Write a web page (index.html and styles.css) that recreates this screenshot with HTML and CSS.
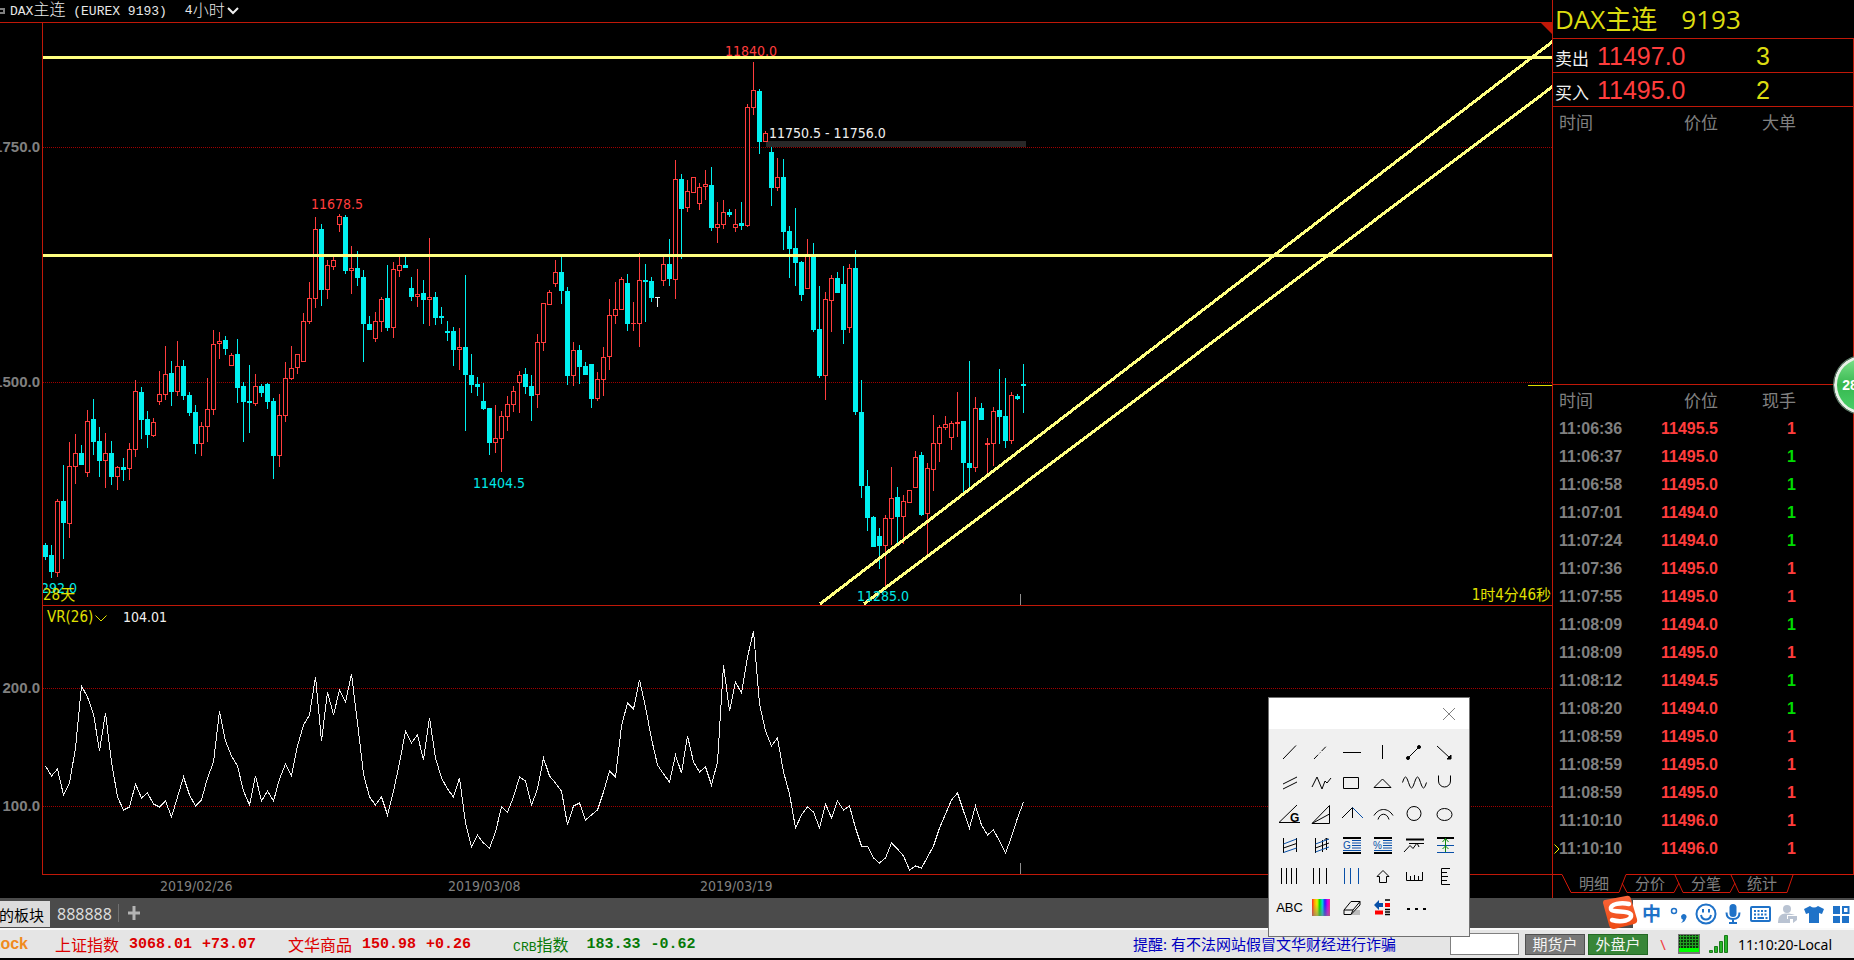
FILE: index.html
```html
<!DOCTYPE html>
<html lang="zh-CN">
<head>
<meta charset="utf-8">
<title>DAX主连 (EUREX 9193)</title>
<link rel="stylesheet" href="styles.css">
</head>
<body>
<div class="app">
  <main class="main">
    <section class="chart">
      <header class="chart-title">
        <span class="window-mark"></span>
        <h1 class="symbol"><span class="mono">DAX</span>主连<span class="mono"> (EUREX 9193)</span></h1>
        <button class="period" type="button"><span class="mono">4</span>小时<svg class="chevron" viewBox="0 0 12 8"><path d="M1 1L6 6L11 1"/></svg></button>
      </header>

      <svg class="pane pane-price" role="img" aria-label="K线图">
        <defs><clipPath id="plot"><rect x="43" y="0" width="4000" height="583"/></clipPath></defs>
        <g transform="translate(0 -23)">
          <line class="grid" x1="43" x2="100%" y1="147.5" y2="147.5"/>
          <line class="grid" x1="43" x2="100%" y1="382.5" y2="382.5"/>
          <rect class="gap-zone" x="766" y="141" width="260" height="6"/>
          <g id="candles" shape-rendering="crispEdges"></g>
          <text class="label up" x="311" y="209">11678.5</text>
          <text class="label up" x="725" y="56">11840.0</text>
          <text class="label down" x="473" y="488">11404.5</text>
          <text class="label plain" x="769" y="138">11750.5 - 11756.0</text>
          <g clip-path="url(#plot)" transform="translate(0 23)">
            <text class="label down end" x="77" y="570">11292.0</text>
          </g>
          <text class="label note" x="43" y="600">28天</text>
          <g class="trend">
            <line x1="42" x2="100%" y1="57.5" y2="57.5"/>
            <line x1="42" x2="100%" y1="255.5" y2="255.5"/>
            <path d="M820 604L1552 42L2552 -726M864 604L1552 87L2552 -664"/>
          </g>
          <text class="label down" x="857" y="601">11285.0</text>
          <path class="cursor-tick" d="M1020.5 594V605"/>
          <line class="frame" x1="42.5" x2="42.5" y1="23" y2="606"/>
          <line class="frame" x1="42" x2="100%" y1="605.5" y2="605.5"/>
          <text class="axis" x="40" y="152">11750.0</text>
          <text class="axis" x="40" y="387">11500.0</text>
        </g>
        <svg x="100%" y="0" overflow="visible">
          <path class="corner" d="M-11 0H0V11z"/>
          <path class="last-mark" d="M-24 362.5H0"/>
          <text class="label note end" x="-1" y="577">1时4分46秒</text>
        </svg>
      </svg>

      <svg class="pane pane-vr" role="img" aria-label="VR(26) 指标">
        <g transform="translate(0 -606)">
          <line class="grid" x1="43" x2="100%" y1="688.5" y2="688.5"/>
          <line class="grid" x1="43" x2="100%" y1="806.5" y2="806.5"/>
          <polyline id="vr" class="vr-line"/>
          <text class="label note" x="47" y="622">VR(26)</text>
          <path class="note-chevron" d="M95.5 615.5L101 621L106.5 615.5"/>
          <text class="label plain" x="123" y="622">104.01</text>
          <path class="cursor-tick" d="M1020.5 863V874"/>
          <line class="frame" x1="42.5" x2="42.5" y1="606" y2="875"/>
          <line class="frame" x1="42" x2="100%" y1="874.5" y2="874.5"/>
          <text class="axis" x="40" y="693">200.0</text>
          <text class="axis" x="40" y="811">100.0</text>
        </g>
      </svg>

      <footer class="dates"><time>2019/02/26</time><time>2019/03/08</time><time>2019/03/19</time></footer>
    </section>

    <aside class="quote">
      <h2 class="quote-title"><span>DAX主连</span><span>9193</span></h2>
      <div class="book">
        <div class="book-row"><span class="side">卖出</span><span class="price">11497.0</span><span class="lots">3</span></div>
        <div class="book-row"><span class="side">买入</span><span class="price">11495.0</span><span class="lots">2</span></div>
        <table class="ticks large-orders"><thead><tr><th>时间</th><th>价位</th><th>大单</th></tr></thead></table>
        <div class="trades">
          <table class="ticks">
            <thead><tr><th>时间</th><th>价位</th><th>现手</th></tr></thead>
            <tbody>
              <tr><td>11:06:36</td><td>11495.5</td><td class="buy">1</td></tr>
              <tr><td>11:06:37</td><td>11495.0</td><td class="sell">1</td></tr>
              <tr><td>11:06:58</td><td>11495.0</td><td class="sell">1</td></tr>
              <tr><td>11:07:01</td><td>11494.0</td><td class="sell">1</td></tr>
              <tr><td>11:07:24</td><td>11494.0</td><td class="sell">1</td></tr>
              <tr><td>11:07:36</td><td>11495.0</td><td class="buy">1</td></tr>
              <tr><td>11:07:55</td><td>11495.0</td><td class="buy">1</td></tr>
              <tr><td>11:08:09</td><td>11494.0</td><td class="sell">1</td></tr>
              <tr><td>11:08:09</td><td>11495.0</td><td class="buy">1</td></tr>
              <tr><td>11:08:12</td><td>11494.5</td><td class="sell">1</td></tr>
              <tr><td>11:08:20</td><td>11494.0</td><td class="sell">1</td></tr>
              <tr><td>11:08:59</td><td>11495.0</td><td class="buy">1</td></tr>
              <tr><td>11:08:59</td><td>11495.0</td><td class="buy">1</td></tr>
              <tr><td>11:08:59</td><td>11495.0</td><td class="buy">1</td></tr>
              <tr><td>11:10:10</td><td>11496.0</td><td class="buy">1</td></tr>
              <tr class="latest"><td><svg class="pointer" viewBox="0 0 6 10"><path d="M.5 .5L5 5L.5 9.5"/></svg>11:10:10</td><td>11496.0</td><td class="buy">1</td></tr>
            </tbody>
          </table>
        </div>
      </div>
      <nav class="quote-tabs">
        <svg class="tab-lines"><path d="M-1 .5H9L18 18.5H66L73 .5H4000"/><path d="M69 9L74 18.5H121L126 9M122 1L130 18.5H177L182 9M178 1L186 18.5H234L240 1"/></svg>
        <button type="button">明细</button><button type="button">分价</button><button type="button">分笔</button><button type="button">统计</button>
      </nav>
    </aside>
  </main>

  <nav class="boards">
    <button class="board current" type="button">我的板块</button>
    <button class="board" type="button">888888</button>
    <button class="add" type="button" aria-label="添加板块"><svg viewBox="0 0 12 14"><path d="M6 0V14M0 7H12"/></svg></button>
    <div class="ime">
      <svg class="ime-logo" viewBox="0 0 36 36"><defs><linearGradient id="sg" x1="0" y1="0" x2="0" y2="1"><stop offset="0" stop-color="#f9653a"/><stop offset="1" stop-color="#ee4a12"/></linearGradient></defs><path fill="url(#sg)" d="M3 5Q1 5 1 8L7 30Q8 34 12 34L32 29Q36 28 35 24L29 4Q28 0 24 1z"/><path fill="none" stroke="#fff" stroke-width="4.500" stroke-linecap="round" d="M27 9C19 7 8 9 9 14C10 18 28 15 29 20C30 25 20 28 10 25"/></svg>
      <div class="ime-bar">
        <button type="button" class="ime-zh">中</button>
        <button type="button" aria-label="标点"><svg viewBox="0 0 24 24"><circle cx="7" cy="9" r="2.500" fill="none" stroke="#1f72c8" stroke-width="1.500"/><path fill="#1f72c8" d="M14 14.500a2.800 2.800 0 1 1 5 2Q18 20 14 21Q16 19 16 17.500Q14 17 14 14.500z"/></svg></button>
        <button type="button" aria-label="表情"><svg viewBox="0 0 24 24" fill="none" stroke="#1f72c8" stroke-width="2"><circle cx="12" cy="12" r="9.500"/><path d="M7 13Q8 17.500 12 17.500T17 13M9 7V10.500M15 7V10.500"/></svg></button>
        <button type="button" aria-label="语音"><svg viewBox="0 0 24 24"><rect x="8.500" y="2" width="7" height="13" rx="3.500" fill="#1f72c8"/><path fill="none" stroke="#1f72c8" stroke-width="2" d="M5.500 10.500Q5.500 17 12 17T18.500 10.500M12 17V21M8 21H16"/></svg></button>
        <button type="button" aria-label="键盘"><svg viewBox="0 0 24 24" fill="none" stroke="#1f72c8"><rect x="3" y="5" width="19" height="14" rx="1" stroke-width="2"/><path stroke-width="2" stroke-dasharray="2 1.500" d="M6 9H20M6 12.500H20"/><path stroke-width="2" d="M6 16H8M9.500 16H16M17.500 16H19.500"/></svg></button>
        <button type="button" aria-label="账户"><svg viewBox="0 0 24 24" fill="#b9c3d2"><circle cx="12" cy="7" r="4"/><path d="M3 20Q3 12 10 11.500H14Q18 12 20 13H12V17H15V21H3z"/><path d="M13 14H22V18L18 21V17H13z"/></svg></button>
        <button type="button" aria-label="皮肤"><svg viewBox="0 0 24 24" fill="#1f72c8"><path d="M8 4Q12 7 16 4L22 7L20 12L17 11V21H7V11L4 12L2 7z"/></svg></button>
        <button type="button" aria-label="工具箱"><svg viewBox="0 0 24 24"><path fill="#1f72c8" d="M4 4H11V12H4zM4 14H11V21H4zM13 14H20V21H13z"/><rect x="14" y="5" width="5.500" height="6" fill="none" stroke="#1f72c8" stroke-width="2"/></svg></button>
      </div>
    </div>
  </nav>

  <footer class="status">
    <span class="brand">Stock</span>
    <div class="indices">
      <span class="index rise"><span>上证指数</span><b>3068.01</b><b>+73.07</b></span>
      <span class="index rise"><span>文华商品</span><b>150.98</b><b>+0.26</b></span>
      <span class="index fall"><span><span class="mono">CRB</span>指数</span><b>183.33</b><b>-0.62</b></span>
    </div>
    <a class="notice" href="#">提醒: 有不法网站假冒文华财经进行诈骗</a>
    <input class="search" type="text" aria-label="代码">
    <button class="account" type="button">期货户</button>
    <button class="account live" type="button">外盘户</button>
    <span class="slash">\</span>
    <svg class="meter" viewBox="0 0 22 20"><defs><pattern id="dots" width="3" height="3" patternUnits="userSpaceOnUse"><rect width="3" height="3" fill="#22a022"/><path fill="#0c350c" d="M0 0H2V2H0z"/></pattern></defs><path fill="#777" d="M0 0H22V20H0z"/><rect x="1" y="1" width="20" height="13" fill="url(#dots)"/><rect x="1" y="14" width="20" height="4" fill="#0f0"/></svg>
    <svg class="signal" viewBox="0 0 22 18"><path fill="#28b428" stroke="#1a7a1a" d="M1.500 15.500h3v2h-3zM6.500 11.500h3v6h-3zM11.500 6.500h3v11h-3zM16.500 .5h3v17h-3z"/></svg>
    <time class="clock">11:10:20-Local</time>
  </footer>

  <button class="ball" type="button">28</button>

  <div class="palette" role="dialog" aria-label="画线工具">
    <div class="palette-head"><button type="button" class="close" aria-label="关闭"><svg viewBox="0 0 12 12"><path d="M0 0L12 12M12 0L0 12"/></svg></button></div>
    <div class="tools">
      <button type="button" aria-label="线段"><svg viewBox="0 0 31 31"><path d="M9 22L22 8.500"/></svg></button>
      <button type="button" aria-label="虚线"><svg viewBox="0 0 31 31"><path stroke-dasharray="6 2 1 2" d="M9 22L22 8.500"/></svg></button>
      <button type="button" aria-label="水平线"><svg viewBox="0 0 31 31"><path d="M7 15.500H25"/></svg></button>
      <button type="button" aria-label="垂直线"><svg viewBox="0 0 31 31"><path d="M15.500 8V22"/></svg></button>
      <button type="button" aria-label="双端线"><svg viewBox="0 0 31 31"><path d="M9 22L22 9"/><circle class="solid" cx="10" cy="21" r="1.500"/><circle class="solid" cx="21" cy="10" r="1.500"/></svg></button>
      <button type="button" aria-label="箭头"><svg viewBox="0 0 31 31"><path d="M8 9L21 21"/><path class="solid" d="M22 18V22H18z"/></svg></button>

      <button type="button" aria-label="平行线"><svg viewBox="0 0 31 31"><path d="M9 16L23 9M9 21L23 14"/></svg></button>
      <button type="button" aria-label="折线"><svg viewBox="0 0 31 31"><path d="M7 19L12 9L17 21L20 13L22 15L26 10"/></svg></button>
      <button type="button" aria-label="矩形"><svg viewBox="0 0 31 31"><path d="M7.500 9.500H22.500V20.500H7.500z"/></svg></button>
      <button type="button" aria-label="三角形"><svg viewBox="0 0 31 31"><path d="M7 19.500L15.500 11L24 19.500z"/></svg></button>
      <button type="button" aria-label="波浪"><svg viewBox="0 0 31 31"><path d="M4.500 14.500q3 -11 6 0t6 0t6 0t6 0"/></svg></button>
      <button type="button" aria-label="U形"><svg viewBox="0 0 31 31"><path d="M9.500 7.500V13a6 6 0 0 0 12 0V7.500"/></svg></button>

      <button type="button" aria-label="江恩角度"><svg viewBox="0 0 31 31"><path d="M23 6L5 23.500H26"/><text class="glyph" x="16" y="23">G</text></svg></button>
      <button type="button" aria-label="速阻线"><svg viewBox="0 0 31 31"><path d="M7 24.500H24.500V6.500zM7 24.500L24.500 15"/></svg></button>
      <button type="button" aria-label="对称角"><svg viewBox="0 0 31 31"><path d="M6 19L16.500 8.500V19"/><path class="blue" d="M16.500 8.500L27 19"/></svg></button>
      <button type="button" aria-label="圆弧"><svg viewBox="0 0 31 31"><path d="M7 16.500C12 8.500 21 8.500 26 16.500M11 20.500C13 13.500 20 13.500 22 20.500"/></svg></button>
      <button type="button" aria-label="圆"><svg viewBox="0 0 31 31"><circle cx="16" cy="14.500" r="7"/></svg></button>
      <button type="button" aria-label="椭圆"><svg viewBox="0 0 31 31"><ellipse cx="15.500" cy="15.500" rx="7.500" ry="6"/></svg></button>

      <button type="button" aria-label="通道"><svg viewBox="0 0 31 31"><path d="M9.500 8V23M22.500 8V22M9.500 18L22.500 13.500"/><path class="blue" d="M9.500 14L22.500 9M9.500 22.500L22.500 18"/></svg></button>
      <button type="button" aria-label="回归通道"><svg viewBox="0 0 31 31"><path d="M10.500 8V23M17.500 10V22M21.500 8V20M10.500 18L24 13M19.500 10L21.500 8L23.500 10"/><path class="blue" d="M10.500 14L24 9M10.500 22L24 17"/></svg></button>
      <button type="button" aria-label="黄金分割"><svg viewBox="0 0 31 31"><path stroke-width="2" d="M7 8H25M7 23H25"/><path class="blue" d="M16 10.500H25M16 13H25M16 15.500H25M16 18H25M7 20.500H25"/><text class="glyph small" x="7" y="18.500">G</text></svg></button>
      <button type="button" aria-label="百分比线"><svg viewBox="0 0 31 31"><path stroke-width="2" d="M7 8H25M7 23H25"/><path class="blue" d="M16 10.500H25M16 13H25M16 15.500H25M16 18H25M7 20.500H25"/><text class="glyph small" x="6" y="18.500">%</text></svg></button>
      <button type="button" aria-label="波浪尺"><svg viewBox="0 0 31 31"><path stroke-width="2" d="M8 9.500H26"/><path d="M11 13.500H26M6 22L12 15.500L15 18.500L19 13L21 17"/></svg></button>
      <button type="button" aria-label="测量"><svg viewBox="0 0 31 31"><path stroke-width="2" d="M8 8H25"/><path class="blue" d="M8 15.500H25M8 22.500H25"/><path class="green" d="M16.500 8V22M13.500 12L16.500 8.500L19.500 12M13.500 19L16.500 16L19.500 19"/></svg></button>

      <button type="button" aria-label="等周期线"><svg viewBox="0 0 31 31"><path d="M7.500 7V23M12.500 7V23M17.500 7V23M22.500 7V23"/></svg></button>
      <button type="button" aria-label="周期线"><svg viewBox="0 0 31 31"><path d="M8.500 7V23M14.500 7V23M21.500 7V23"/></svg></button>
      <button type="button" aria-label="斐波那契周期"><svg viewBox="0 0 31 31"><path class="blue" d="M8.500 7V23M14.500 7V23M22.500 7V23"/></svg></button>
      <button type="button" aria-label="上箭头"><svg viewBox="0 0 31 31"><path d="M10 15.500L16 9.500L22 15.500H19.500V21.500H12.500V15.500z"/></svg></button>
      <button type="button" aria-label="水平尺"><svg viewBox="0 0 31 31"><path d="M8.500 11V19.500H24.500V11M12.500 15V19M16.500 14V19M20.500 15V19"/></svg></button>
      <button type="button" aria-label="垂直尺"><svg viewBox="0 0 31 31"><path d="M21 7.500H12.500V23.500H21M12.500 11.500H18M12.500 15.500H19M12.500 19.500H18"/></svg></button>

      <button type="button" class="abc">ABC</button>
      <button type="button" class="swatch" aria-label="颜色"><span></span></button>
      <button type="button" aria-label="橡皮"><svg viewBox="0 0 31 31"><path fill="#bbb" stroke="none" d="M14 18H24V23H10z"/><path fill="#f0f0f0" d="M8 18L15 9.500H24L17 18zM8 18V22.500H15L24 13V9.500M17 18L15 22.500"/></svg></button>
      <button type="button" aria-label="管理"><svg viewBox="0 0 31 31"><path class="fill-blue" d="M7 13L12 8V11H16V15H12V18z"/><path class="fill-red" d="M8 18.500H16V22.500H8zM18 11H23V15H18z"/><path stroke-width="1.500" d="M18 8H23M18 17.500H23M18 20H23M18 22.500H23"/></svg></button>
      <button type="button" aria-label="更多"><svg viewBox="0 0 31 31"><path stroke-width="2" d="M9 17H12M17 17H20M25 17H28"/></svg></button>
    </div>
  </div>
</div>
<script src="chart.js"></script>
</body>
</html>
```

FILE: chart.js
```js
// Each candle: colour code, high, body top, body bottom, low (pixels down the pane stack).
const STEP = 6;
const LEFT = 43;
const COLORS = { r: '#ff3d3d', c: '#00f0f0', w: '#f0f0f0' };

const candles = `c543,545,557,560 c545,555,572,578 r499,501,573,577 c465,501,523,559 r442,466,524,538 r434,453,467,484
c445,453,465,465 r410,421,473,477 c399,419,442,455 c427,441,461,477 r433,453,461,488 c441,453,477,485 r466,467,477,490
c458,467,470,481 r443,449,469,480 r380,391,450,457 c387,392,420,439 c411,419,435,448 r418,422,436,437 r371,394,402,405
r346,374,395,400 c361,373,392,406 r341,366,392,396 c360,366,396,400 c392,395,413,416 c405,412,444,454 r422,426,444,456
r378,409,427,442 r330,344,410,415 r332,341,344,359 c336,340,349,355 r353,355,366,366 c339,354,388,403 c382,386,402,442
c365,401,403,433 r374,386,404,406 c384,386,393,397 c383,384,402,409 c398,401,456,479 r394,415,456,467 r362,378,416,422
r346,368,379,380 r354,354,368,374 r313,321,362,362 r282,298,322,324 r217,229,299,308 c224,229,290,306 r260,265,290,299
r256,260,267,270 r214,216,225,232 c215,217,271,274 r246,268,271,294 c251,268,278,286 c270,277,324,362 c316,324,330,330
r312,321,339,342 r297,299,322,332 c265,298,328,331 r262,269,328,338 r256,265,271,277 c256,265,268,268 c277,288,297,301
r269,294,297,307 c280,293,300,324 r238,297,300,326 c292,297,318,325 c307,316,318,324 c321,331,333,341 c327,331,350,366
r328,347,350,370 c275,347,375,431 c354,375,385,393 c377,384,387,396 c383,401,409,410 c408,408,443,455 r405,438,443,453
r411,416,439,472 r396,404,417,431 r386,391,405,412 r371,375,383,413 c368,374,387,394 c375,386,396,421 r334,342,395,408
r303,303,343,351 r290,292,305,305 r260,272,284,287 c256,272,291,304 c287,291,376,385 r342,350,376,386 c345,350,367,384
c362,366,375,375 c364,364,399,408 r372,379,399,401 r347,357,380,396 r299,315,357,370 r282,309,316,324 r277,279,310,310
c274,283,324,331 r302,323,324,331 r253,280,324,347 c264,280,282,322 c277,281,298,302 w297,297,298,307 r256,264,281,286
c239,264,279,286 r160,179,280,299 c174,179,209,259 r180,191,208,212 r177,177,193,193 r183,187,204,210 r170,184,187,200
c167,185,228,231 r202,224,228,243 r200,212,225,229 c209,212,215,217 r209,224,228,232 c202,223,226,230 r104,107,226,227
r62,90,108,115 c89,91,142,154 r131,133,142,142 c147,152,188,206 r158,177,188,191 c159,177,232,250 c226,231,249,278
c208,248,263,286 c261,262,295,301 r239,256,289,289 c243,256,330,332 c286,329,376,378 r292,299,376,400 r275,278,301,332
c272,278,293,293 c266,284,330,344 r264,268,328,333 c250,268,412,415 c380,412,486,498 c470,486,518,531 c516,517,547,547
c528,536,546,569 r515,518,546,586 r467,498,519,545 c487,497,517,545 r495,501,517,544 r490,490,503,503 r451,457,488,488
c452,455,515,516 r463,468,514,555 r415,443,470,491 r425,427,444,462 r416,424,428,430 r421,423,438,450 r392,422,424,437
c421,421,463,492 c361,463,468,490 r397,408,468,472 c403,408,420,420 r438,443,445,474 r407,411,444,466 c369,410,417,444
c378,416,441,448 r392,395,441,444 c394,396,399,400 c364,384,386,413`.split(/\s+/);

const vr = [766,776,769,795,783,748,686,697,714,751,713,762,797,810,807,784,798,793,804,807,801,817,797,777,795,806,800,
778,762,711,741,756,766,791,805,776,801,791,801,779,764,776,746,725,715,677,741,692,715,690,702,674,723,774,797,805,797,
815,791,763,731,743,735,760,718,758,778,789,797,778,823,847,835,843,848,832,807,812,797,777,781,805,789,758,776,783,791,
825,806,803,820,815,810,792,771,777,726,703,709,680,707,739,765,774,782,755,773,736,762,772,767,785,762,665,711,682,693,
657,631,704,731,746,738,772,794,828,815,807,812,828,804,818,801,810,806,828,846,846,858,863,858,843,849,856,870,866,868,
857,846,828,814,800,793,811,828,806,825,835,830,841,853,837,818,802];

const layer = document.getElementById('candles');
const NS = 'http://www.w3.org/2000/svg';

function rect(x, y, w, h, fill) {
  const el = document.createElementNS(NS, 'rect');
  el.setAttribute('x', x);
  el.setAttribute('y', y);
  el.setAttribute('width', w);
  el.setAttribute('height', h);
  el.setAttribute('fill', fill);
  layer.append(el);
}

candles.forEach((entry, i) => {
  const kind = entry[0];
  const [high, top, bottom, low] = entry.slice(1).split(',').map(Number);
  const x = LEFT + STEP * i;
  const color = COLORS[kind];
  rect(x + 2, high, 1, low - high, color);
  rect(x, top, 5, bottom - top, color);
  if (kind === 'r' && bottom - top > 2) {
    rect(x + 1, top + 1, 3, bottom - top - 2, '#000');
  }
});

document.getElementById('vr').setAttribute('points',
  vr.map((y, i) => `${LEFT + 2.5 + STEP * i},${y}`).join(' '));
```

FILE: styles.css
```css
* { box-sizing: border-box; }

body {
  margin: 0;
  background: #000;
  color: #808080;
  font-family: "Noto Sans", "Noto Sans CJK SC", sans-serif;
  font-size: 15px;
}

button {
  padding: 0;
  border: 0;
  background: none;
  color: inherit;
  font: inherit;
}

svg { display: block; }

.app {
  position: relative;
  display: flex;
  flex-direction: column;
  min-height: 100vh;
  overflow: hidden;
}

.main { display: flex; }

/* chart */
.chart {
  flex: 1;
  min-width: 0;
}

.chart-title {
  display: flex;
  align-items: center;
  height: 23px;
  border-bottom: 1px solid #c01808;
  color: #e8e8e8;
  font-family: "Liberation Serif", "Noto Sans CJK SC", sans-serif;
  font-size: 16px;
  line-height: 22px;
}

.window-mark {
  width: 5px;
  height: 6px;
  margin-right: 5px;
  border: 2px solid #808080;
  border-left: 0;
}

.symbol {
  margin: 0 18px 0 0;
  font-size: 16px;
  font-weight: 300;
  white-space: pre;
}

.mono {
  font-family: "Liberation Mono", monospace;
  font-size: 13px;
}

.period {
  display: flex;
  align-items: center;
  font-weight: 300;
}

.chevron {
  width: 12px;
  height: 8px;
  margin-left: 2px;
  fill: none;
  stroke: #f0f0f0;
  stroke-width: 2;
}

.pane { width: 100%; }
.pane-price { height: 583px; }
.pane-vr { height: 269px; }

.grid {
  stroke: #a00000;
  stroke-dasharray: 1 1;
  shape-rendering: crispEdges;
}

.frame { stroke: #c01808; }
.gap-zone { fill: #282828; }
.corner { fill: #c01808; }
.last-mark { stroke: #dcdc00; }
.cursor-tick { stroke: #909090; }

.trend {
  fill: none;
  stroke: #ffff80;
  stroke-width: 3;
  shape-rendering: crispEdges;
}

.vr-line {
  fill: none;
  stroke: #f0f0f0;
  shape-rendering: crispEdges;
}

.label {
  font-family: "DejaVu Sans Condensed", "Noto Sans", "Noto Sans CJK SC", sans-serif;
  font-size: 14px;
}

.label.up { fill: #ff3d3d; }
.label.down { fill: #00e8e8; }
.label.plain { fill: #f0f0f0; }
.label.note { fill: #e0e000; font-size: 15px; }
.label.end { text-anchor: end; }

.note-chevron {
  fill: none;
  stroke: #e0e000;
}

.axis {
  fill: #808080;
  font: bold 15px "Liberation Sans", sans-serif;
  text-anchor: end;
}

.dates {
  display: grid;
  grid-template-columns: 288px 252px auto;
  height: 23px;
  padding-left: 160px;
  font-family: "DejaVu Sans Condensed", "Noto Sans", sans-serif;
  font-size: 14px;
  line-height: 23px;
}

/* quote panel */
.quote {
  display: flex;
  flex-direction: column;
  width: 302px;
  border-left: 1px solid #c01808;
}

.quote-title {
  display: flex;
  gap: 24px;
  height: 38px;
  margin: 0;
  padding-left: 2px;
  color: #dcdc10;
  font-family: "Open Sans", "Noto Sans CJK SC", sans-serif;
  font-size: 26px;
  font-weight: 400;
  line-height: 38px;
}

.book {
  display: flex;
  flex: 1;
  flex-direction: column;
  border-top: 1px solid #c01808;
  border-right: 1px solid #c01808;
}

.book-row {
  display: grid;
  grid-template-columns: 42px 120px 53px;
  align-items: baseline;
  height: 34px;
  padding-left: 2px;
  border-bottom: 1px solid #c01808;
  line-height: 34px;
}

.side {
  color: #f0f0f0;
  font-size: 17px;
}

.price {
  color: #ff3d3d;
  font-family: "Liberation Sans", sans-serif;
  font-size: 25px;
}

.lots {
  color: #dcdc10;
  font-family: "Liberation Sans", sans-serif;
  font-size: 25px;
  text-align: right;
}

.ticks {
  width: 243px;
  border-collapse: collapse;
  table-layout: fixed;
  font: bold 16px "Liberation Sans", sans-serif;
}

.ticks th {
  height: 30px;
  padding: 0;
  font-family: "Noto Sans CJK SC", sans-serif;
  font-size: 17px;
  font-weight: 400;
  line-height: 30px;
  text-align: right;
}

.ticks td {
  height: 28px;
  padding: 0;
  color: #ff3d3d;
  line-height: 28px;
  text-align: right;
}

.ticks th:first-child,
.ticks td:first-child {
  position: relative;
  width: 80px;
  padding-left: 6px;
  text-align: left;
}

.ticks td:first-child { color: #808080; }
.ticks th:nth-child(2) { width: 85px; }
.ticks td.buy { color: #ff3d3d; }
.ticks td.sell { color: #00dc00; }

.large-orders { margin-bottom: auto; }

.trades {
  padding-bottom: 11px;
  border-top: 1px solid #c01808;
}

.pointer {
  position: absolute;
  top: 9px;
  left: 1px;
  width: 6px;
  height: 10px;
  fill: none;
  stroke: #f0f000;
}

.quote-tabs {
  position: relative;
  display: grid;
  grid-template-columns: repeat(4, 56px);
  height: 24px;
  padding: 0 0 5px 13px;
}

.quote-tabs button {
  position: relative;
  font-size: 15px;
  line-height: 19px;
}

.tab-lines {
  position: absolute;
  top: 0;
  left: 0;
  width: 100%;
  height: 24px;
  fill: none;
  stroke: #d01808;
}

/* board tabs */
.boards {
  display: flex;
  align-items: stretch;
  height: 32px;
  border-bottom: 2px solid #fafafa;
  background: #4b4b4b;
}

.board {
  margin: 3px 0 1px;
  padding: 0 6px 0 7px;
  color: #dcdcdc;
  font-size: 16px;
}

.board.current {
  display: flex;
  align-items: center;
  justify-content: flex-end;
  width: 50px;
  overflow: hidden;
  background: #dcdcdc;
  color: #000;
  font-size: 15px;
  white-space: nowrap;
}

.add {
  align-self: center;
  padding: 2px 9px;
  border-left: 1px solid #707070;
}

.add svg {
  width: 12px;
  height: 14px;
  stroke: #b4b4b4;
  stroke-width: 3;
}

.ime {
  display: flex;
  margin: 2px 0 0 auto;
}

.ime-logo {
  z-index: 1;
  width: 36px;
  height: 36px;
  margin: -5px -5px 0 0;
}

.ime-bar {
  display: grid;
  grid-template-columns: repeat(8, 27px);
  align-items: center;
  justify-content: end;
  width: 221px;
  background: #fff;
}

.ime-bar button {
  display: flex;
  justify-content: center;
}

.ime-bar svg {
  width: 24px;
  height: 24px;
}

.ime-bar .ime-zh {
  color: #1f72c8;
  font-size: 19px;
  font-weight: 700;
  line-height: 24px;
}

/* status bar */
.status {
  display: flex;
  align-items: center;
  height: 28px;
  overflow: hidden;
  background: #e5e5e5;
  color: #000;
}

.brand {
  display: flex;
  justify-content: flex-end;
  width: 28px;
  margin-right: 27px;
  color: #f08a20;
  font: bold 16px "Liberation Sans", sans-serif;
}

.indices {
  display: flex;
  flex: 1;
  gap: 32px;
}

.index {
  display: flex;
  align-items: center;
  gap: 10px;
  font-size: 16px;
}

.index b { font: bold 15px "Liberation Mono", monospace; }
.rise { color: #dc0000; }
.fall { color: #087a08; margin-left: 10px; }
.fall > span { margin-right: 8px; }

.notice {
  width: 317px;
  color: #0000c0;
  font-size: 15px;
  line-height: 22px;
  text-decoration: none;
  white-space: nowrap;
}

.search {
  width: 69px;
  height: 22px;
  border: 1px solid #808080;
  background: #fff;
}

.account {
  width: 60px;
  height: 21px;
  margin-left: 6px;
  border: 1px solid #505050;
  background: #787878;
  color: #f4f4f4;
  font-size: 15px;
  line-height: 18px;
}

.account.live {
  margin-left: 3px;
  border-color: #246824;
  background: #388638;
}

.slash {
  width: 30px;
  color: #f04040;
  text-align: center;
}

.meter {
  width: 22px;
  height: 20px;
}

.signal {
  width: 22px;
  height: 18px;
  margin: 0 8px;
}

.clock {
  width: 116px;
  font-family: "Noto Sans", sans-serif;
  font-size: 14px;
}

/* floating ball */
.ball {
  position: absolute;
  top: 356px;
  right: -36px;
  width: 56px;
  height: 58px;
  padding-right: 24px;
  border: 3px solid #e8f0e8;
  border-radius: 50%;
  outline: 1px solid #60806c;
  background: linear-gradient(#7ae088, #38b850 50%, #48d068);
  color: #fff;
  font: bold 14px "Liberation Sans", sans-serif;
}

/* drawing tools */
.palette {
  position: absolute;
  right: 384px;
  bottom: 23px;
  width: 202px;
  border: 1px solid #707070;
  background: #f0f0f0;
}

.palette-head {
  display: flex;
  align-items: center;
  justify-content: flex-end;
  height: 31px;
  padding-right: 14px;
  background: #fff;
}

.close svg {
  width: 12px;
  height: 12px;
  stroke: #808080;
}

.tools {
  display: grid;
  grid-template-columns: repeat(6, 31px);
  grid-auto-rows: 31px;
  padding: 8px 5px 13px;
}

.tools button { color: #000; }

.tools svg {
  width: 31px;
  height: 31px;
  fill: none;
  stroke: #000;
}

.tools .solid { fill: #000; }
.tools .blue { stroke: #0850a8; }
.tools .green { stroke: #108a10; }
.tools .fill-blue { fill: #0850a8; stroke: none; }
.tools .fill-red { fill: #f00; stroke: none; }

.glyph {
  fill: #000;
  stroke: none;
  font: bold 12px "Liberation Sans", sans-serif;
}

.glyph.small {
  fill: #0850a8;
  font: 10px "Liberation Sans", sans-serif;
}

.tools .abc { font: 13px "Liberation Sans", sans-serif; }

.swatch {
  display: flex;
  align-items: center;
  justify-content: center;
}

.swatch span {
  width: 18px;
  height: 17px;
  background:
    linear-gradient(transparent 30%, rgba(128, 128, 128, 0.6)),
    linear-gradient(90deg, #f22, #fa0, #ee0, #0d0, #0dd, #22f, #c0e, #f28);
}
```
